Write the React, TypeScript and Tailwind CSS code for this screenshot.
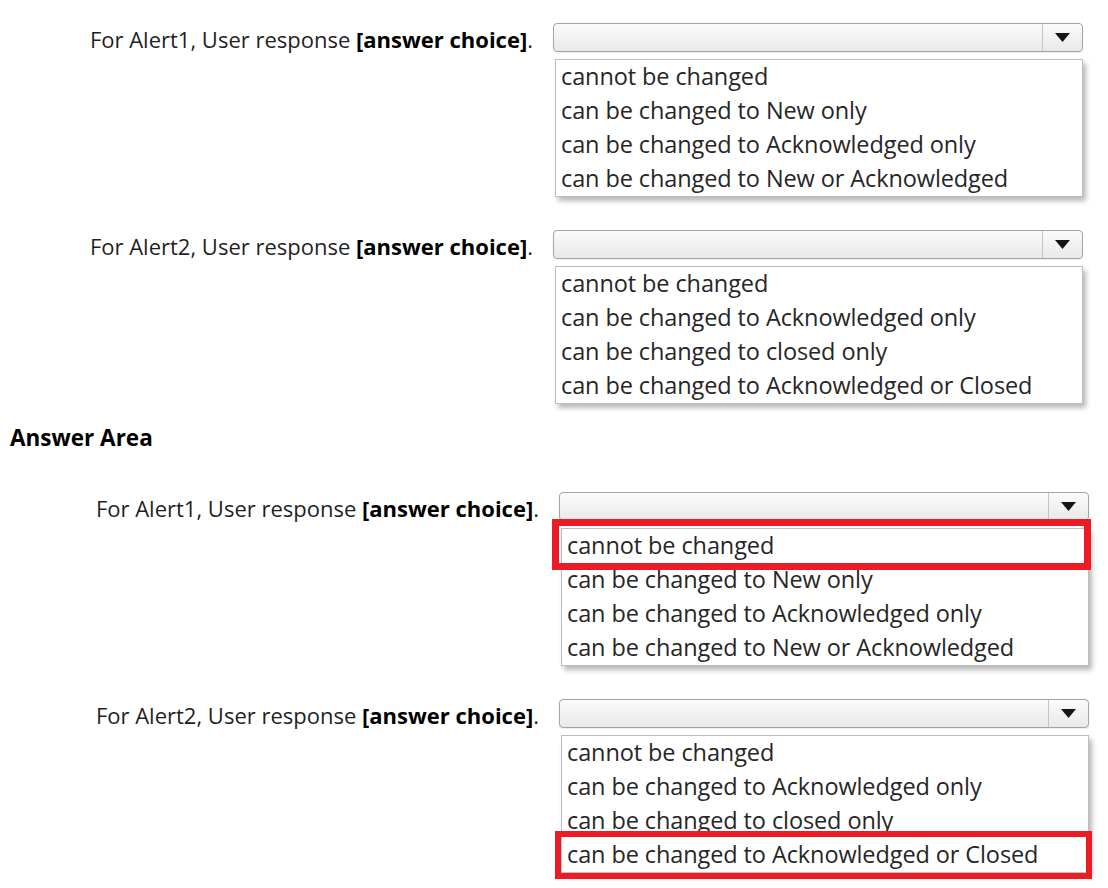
import React from "react";

const font = { fontFamily: '"Open Sans", "Noto Sans", sans-serif' };

type Row = {
  options: string[];
  mark?: "first" | "last";
};

const alert1 = [
  "cannot be changed",
  "can be changed to New only",
  "can be changed to Acknowledged only",
  "can be changed to New or Acknowledged",
];

const alert2 = [
  "cannot be changed",
  "can be changed to Acknowledged only",
  "can be changed to closed only",
  "can be changed to Acknowledged or Closed",
];

function Dropdown({ options, mark }: Row) {
  return (
    <div className="w-[530px]">
      <div className="flex h-[29px] rounded-[4px] border border-[#a3a3a3] bg-gradient-to-b from-[#fbfbfb] to-[#e9e9e9] shadow-[0_1px_1px_rgba(0,0,0,0.08)]">
        <div className="flex-1" />
        <div className="flex w-[40px] items-center justify-center border-l border-[#c4c4c4]">
          <svg width="15" height="9" viewBox="0 0 15 9">
            <path d="M0 0 H15 L7.5 9 Z" fill="#141414" />
          </svg>
        </div>
      </div>
      <div className="relative mt-[7px] ml-[2px] border border-[#bdbdbd] bg-white shadow-[3px_4px_5px_rgba(0,0,0,0.28)]">
        {options.map((o) => (
          <div key={o} className="flex h-[34px] items-center pl-[5px] text-[23.5px] tracking-[-0.1px] text-[#262626]">
            {o}
          </div>
        ))}
        {mark === "first" && (
          <div className="absolute left-[-10px] top-[-10px] h-[51px] w-[539px] border-[7px] border-[#ec1c24]" />
        )}
        {mark === "last" && (
          <div className="absolute left-[-7px] top-[95px] h-[48px] w-[537px] border-[6px] border-[#ec1c24]" />
        )}
      </div>
    </div>
  );
}

function Question({ n, children }: { n: string; children: React.ReactNode }) {
  return (
    <div className="flex items-start">
      <div className="flex h-[29px] w-[533px] items-center justify-end pt-[4px] text-[22px] whitespace-nowrap text-[#1f1f1f]">
        For Alert{n}, User response&nbsp;<b className="font-bold text-black">[answer choice]</b>.
      </div>
      <div className="ml-[20px]">{children}</div>
    </div>
  );
}

export default function App() {
  return (
    <div className="h-[888px] w-[1108px] overflow-hidden bg-white" style={font}>
      <div className="flex flex-col gap-[33px] pt-[23px]">
        <Question n="1">
          <Dropdown options={alert1} />
        </Question>
        <Question n="2">
          <Dropdown options={alert2} />
        </Question>
      </div>
      <div className="mt-[19px] h-[30px] pl-[10px] text-[22.5px] font-bold leading-[30px] text-black">Answer Area</div>
      <div className="mt-[39px] flex flex-col gap-[33px] pl-[6px]">
        <Question n="1">
          <Dropdown options={alert1} mark="first" />
        </Question>
        <Question n="2">
          <Dropdown options={alert2} mark="last" />
        </Question>
      </div>
    </div>
  );
}
